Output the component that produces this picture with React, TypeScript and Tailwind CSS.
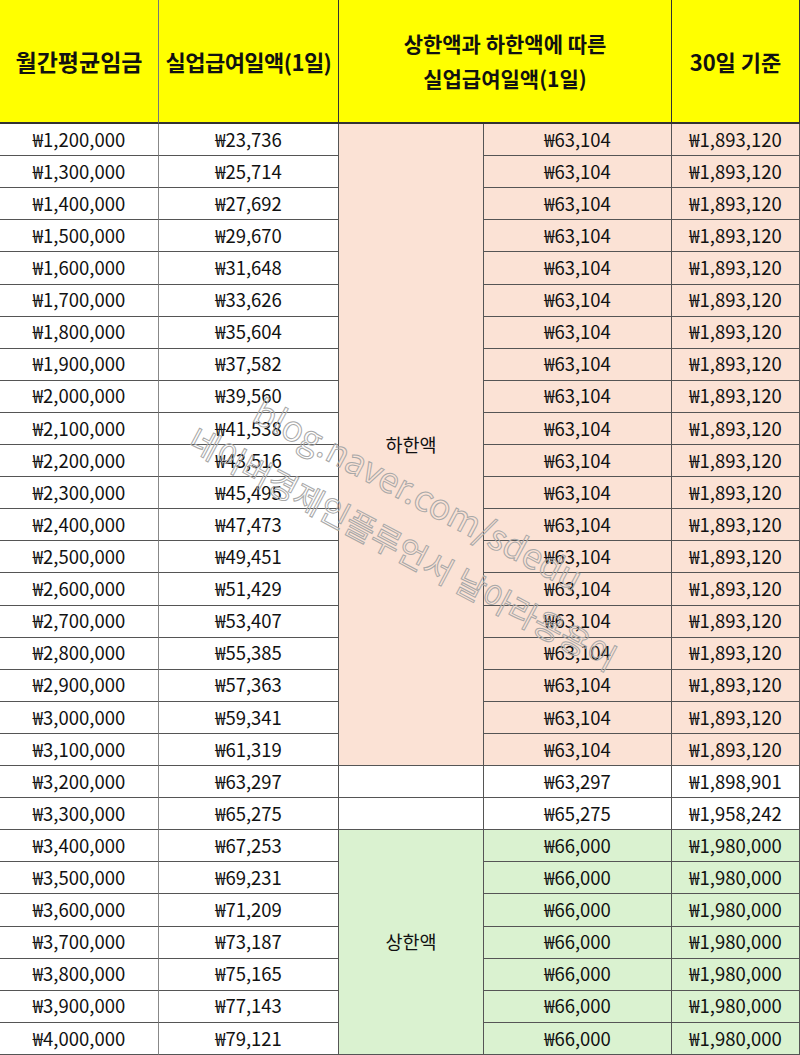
const salaries = [
    1200000, 1300000, 1400000, 1500000, 1600000, 1700000, 1800000, 1900000, 2000000, 2100000,
    2200000, 2300000, 2400000, 2500000, 2600000, 2700000, 2800000, 2900000, 3000000, 3100000,
    3200000, 3300000, 3400000, 3500000, 3600000, 3700000, 3800000, 3900000, 4000000,
];

const daily = [
    23736, 25714, 27692, 29670, 31648, 33626, 35604, 37582, 39560, 41538,
    43516, 45495, 47473, 49451, 51429, 53407, 55385, 57363, 59341, 61319,
    63297, 65275, 67253, 69231, 71209, 73187, 75165, 77143, 79121,
];

const won = (n: number) => '₩' + n.toLocaleString('en-US');

// actual daily benefit after floor / cap
const applied = (i: number) => {
    if (i < 20) return 63104;
    if (i < 22) return daily[i];
    return 66000;
};

// 30-day totals as printed in the sheet
const monthly = (i: number) => {
    if (i < 20) return 1893120;
    if (i === 20) return 1898901;
    if (i === 21) return 1958242;
    return 1980000;
};

const rowBg = (i: number) => {
    if (i < 20) return 'bg-[#fbe2d5]';
    if (i < 22) return 'bg-white';
    return 'bg-[#daf2d0]';
};

export default function App() {
    const cell = 'flex items-center justify-center border-b border-r border-[#555] text-[18.5px] text-[#111]';

    return (
        <div className="relative w-[800px] h-[1055px] overflow-hidden bg-white font-['Noto_Sans_CJK_KR','Malgun_Gothic',sans-serif]">
            <div className="grid h-full grid-cols-[159px_180px_145px_188px_128px] grid-rows-[124px_repeat(29,minmax(0,1fr))]">
                {/* Header */}
                <div className="flex items-center justify-center border-b-2 border-r border-b-[#333] border-r-[#777] bg-[#ffff00] text-[23px] font-bold text-[#111]">
                    월간평균임금
                </div>
                <div className="flex items-center justify-center border-b-2 border-r border-[#333] bg-[#ffff00] text-[22px] font-bold tracking-tight text-[#111]">
                    실업급여일액(1일)
                </div>
                <div className="col-span-2 flex flex-col items-center justify-center border-b-2 border-r border-[#333] bg-[#ffff00] text-[21px] font-bold leading-[35px] text-[#111]">
                    <span>상한액과 하한액에 따른</span>
                    <span>실업급여일액(1일)</span>
                </div>
                <div className="flex items-center justify-center border-b-2 border-r border-[#333] bg-[#ffff00] text-[22px] font-bold text-[#111]">
                    30일 기준
                </div>

                {salaries.map((s, i) => (
                    <div key={s} className="contents">
                        <div className={`${cell} border-r-[#888] bg-white`}>{won(s)}</div>
                        <div className={`${cell} bg-white`}>{won(daily[i])}</div>
                        {i === 0 && (
                            <div className={`${cell} row-span-20 bg-[#fbe2d5]`}>하한액</div>
                        )}
                        {(i === 20 || i === 21) && <div className={`${cell} bg-white`} />}
                        {i === 22 && (
                            <div className={`${cell} row-span-7 bg-[#daf2d0]`}>상한액</div>
                        )}
                        <div className={`${cell} ${rowBg(i)}`}>{won(applied(i))}</div>
                        <div className={`${cell} ${rowBg(i)}`}>{won(monthly(i))}</div>
                    </div>
                ))}
            </div>

            {/* watermark */}
            <div className="pointer-events-none absolute left-[266px] top-[391px] origin-top-left rotate-[28deg] whitespace-nowrap text-[35px] leading-none text-transparent [-webkit-text-stroke:1px_#a8a8a8]">
                blog.naver.com/sdedu
            </div>
            <div className="pointer-events-none absolute left-[200px] top-[421px] origin-top-left rotate-[28deg] whitespace-nowrap text-[32px] leading-none text-transparent [-webkit-text-stroke:1px_#a8a8a8]">
                네이버경제인플루언서 날아라용용이
            </div>
        </div>
    );
}
